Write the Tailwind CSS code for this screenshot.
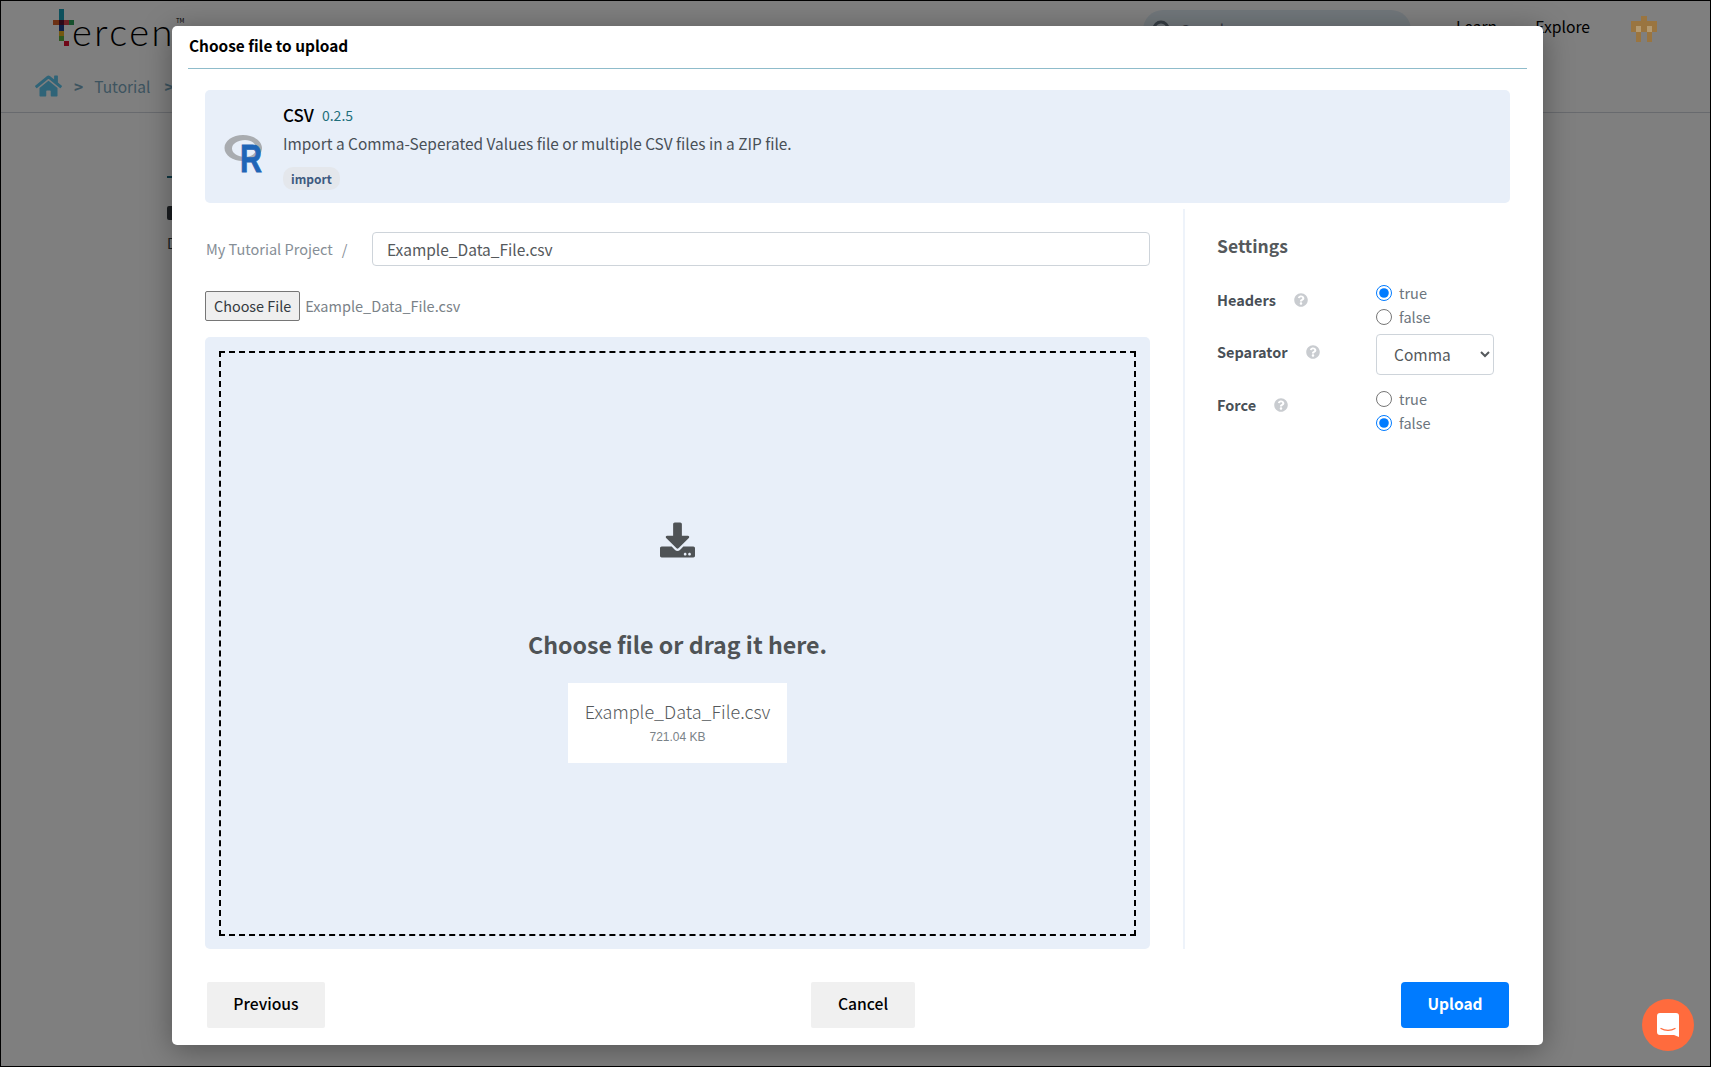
<!DOCTYPE html>
<html lang="en">
<head>
    <meta charset="UTF-8">
    <meta name="viewport" content="width=device-width, initial-scale=1.0">
    <script src="https://cdn.jsdelivr.net/npm/@tailwindcss/browser@4"></script>
    <title>Choose file to upload</title>
</head>
<body class="bg-white font-['Noto_Sans_CJK_SC',sans-serif] text-[#495057]">
<div class="relative w-[1711px] h-[1067px] overflow-hidden border border-black">
    <!-- page behind the dialog -->
    <header class="h-[112px] border-b border-gray-300">
        <div class="flex items-start h-[73px]">
            <div class="flex items-start ml-[52px] mt-[8px]">
                <svg width="21" height="37" viewBox="0 0 21 37" class="shrink-0" shape-rendering="crispEdges">
                    <rect x="6" y="0" width="5" height="11" fill="#1aa0b8"/>
                    <rect x="0" y="11" width="6" height="5" fill="#d8622a"/>
                    <rect x="6" y="11" width="5" height="5" fill="#5a1030"/>
                    <rect x="11" y="11" width="5" height="5" fill="#d8404a"/>
                    <rect x="16" y="11" width="5" height="5" fill="#2fa05a"/>
                    <rect x="6" y="16" width="5" height="6" fill="#1d3f8f"/>
                    <rect x="6" y="22" width="5" height="5" fill="#e8b020"/>
                    <rect x="6" y="27" width="5" height="5" fill="#5cb040"/>
                    <rect x="11" y="32" width="5" height="5" fill="#e01030"/>
                </svg>
                <span class="ml-[-2px] mt-[3px] text-[38px] leading-none tracking-[2.5px] font-['Lato'] font-light text-black">ercen</span>
                <span class="ml-[1px] mt-[9px] text-[6px] leading-none text-black">TM</span>
            </div>
            <div class="ml-auto mt-[9px] w-[268px] h-[40px] rounded-[20px] bg-[#e3eef7] flex items-center px-2 shrink-0">
                <svg width="22" height="22" viewBox="0 0 22 22" fill="none" stroke="#6c7a89" stroke-width="3"><circle cx="10" cy="10" r="7"/></svg>
                <span class="ml-2 text-[15px] text-gray-500">Search</span>
            </div>
            <nav class="flex items-center gap-[38px] ml-[45px] mt-[14px] text-[15.7px] leading-6 text-black">
                <span>Learn</span>
                <span>Explore</span>
            </nav>
            <svg width="26" height="26" viewBox="0 0 5 5" class="relative z-10 ml-[41px] mt-[15px] mr-[53px] shrink-0" shape-rendering="crispEdges" fill="#9a7540">
                <rect x="2" y="0" width="1" height="1"/>
                <rect x="0" y="1" width="5" height="1"/>
                <rect x="0" y="2" width="1" height="1"/>
                <rect x="2" y="2" width="1" height="1"/>
                <rect x="4" y="2" width="1" height="1"/>
                <rect x="1" y="2" width="1" height="1" fill="#b39a72"/>
                <rect x="3" y="2" width="1" height="1" fill="#b39a72"/>
                <rect x="1" y="3" width="1" height="2"/>
                <rect x="3" y="3" width="1" height="2"/>
            </svg>
        </div>
        <div class="flex items-center ml-[34px] text-[15.5px] leading-6 text-[#7aa8c0]">
            <svg width="27" height="24" viewBox="0 0 576 512" fill="#2f6478" class="relative z-10"><path d="M280.37 148.26L96 300.11V464a16 16 0 0 0 16 16l112.06-.29a16 16 0 0 0 15.92-16V368a16 16 0 0 1 16-16h64a16 16 0 0 1 16 16v95.64a16 16 0 0 0 16 16.05L464 480a16 16 0 0 0 16-16V300L295.67 148.26a12.19 12.19 0 0 0-15.3 0zM571.6 251.47L488 182.56V44.05a12 12 0 0 0-12-12h-56a12 12 0 0 0-12 12v72.61L318.47 43a48 48 0 0 0-61 0L4.34 251.47a12 12 0 0 0-1.6 16.9l25.5 31A12 12 0 0 0 45.15 301l235.22-193.74a12.19 12.19 0 0 1 15.3 0L530.9 301a12 12 0 0 0 16.9-1.6l25.5-31a12 12 0 0 0-1.7-16.93z"/></svg>
            <span class="ml-[12px] font-bold">&gt;</span>
            <span class="ml-[11px]">Tutorial</span>
            <span class="ml-[14px] font-bold">&gt;</span>
        </div>
    </header>
    <main class="pl-[166px] text-[#343a40]">
        <div class="mt-[63px] w-6 h-[2px] bg-[#1f6f85]"></div>
        <div class="mt-[28px] w-6 h-[14px] bg-[#343a40] rounded-[2px]"></div>
        <div class="mt-[13px] text-[14px] leading-5">Data</div>
    </main>

    <!-- backdrop -->
    <div class="absolute inset-0 bg-black/50"></div>

    <!-- dialog -->
    <div class="absolute left-[171px] top-[25px] w-[1371px] h-[1019px] bg-white rounded-[5px] shadow-[0_5px_30px_rgba(0,0,0,0.35)] flex flex-col">
        <div class="mx-4 h-[43px] pt-[7px] pl-px border-b border-[#8fbccb] text-[15.4px] leading-6 font-semibold text-black shrink-0">Choose file to upload</div>

        <div class="flex-1 flex flex-col px-[33px] min-h-0">
            <!-- operator card -->
            <div class="mt-[21px] h-[113px] bg-[#e8eff9] rounded-[5px] flex items-center shrink-0 pl-[19px]">
                <svg width="40" height="40" viewBox="0 0 40 40" class="shrink-0 mt-[15px] overflow-visible">
                    <path fill-rule="evenodd" fill="#a9acb0" d="M19 1C8.5 1 .5 6.8.5 14S8.5 27 19 27s19-5.8 19-13S29.500 1 19 1zM21 6c-7 0-13 3.600-13 8.500S14 23 21 23s11-3.600 11-8.500S28 6 21 6z"/>
                    <text transform="translate(16 38) scale(.78 1)" font-family="Liberation Sans" font-weight="700" font-size="39" stroke="#1f65b7" stroke-width=".8" fill="#1f65b7">R</text>
                </svg>
                <div class="ml-[19px]">
                    <div class="flex items-center">
                        <span class="text-[17px] leading-6 font-medium text-black">CSV</span>
                        <span class="ml-2 text-[14px] text-[#1f6f7c]">0.2.5</span>
                    </div>
                    <p class="mt-[4px] text-[15.43px] leading-6">Import a Comma-Seperated Values file or multiple CSV files in a ZIP file.</p>
                    <span class="inline-block mt-[12px] px-[8px] h-[23px] rounded-[10px] bg-[#e4e7ec] text-[12px] leading-[23px] font-semibold text-[#3d5a80]">import</span>
                </div>
            </div>

            <div class="flex-1 flex min-h-0">
                <!-- file column -->
                <div class="w-[945px] flex flex-col shrink-0">
                    <div class="flex items-center mt-[29px] h-[34px]">
                        <div class="w-[167px] pl-px flex text-[14.5px] text-[#868e96] shrink-0"><span>My Tutorial Project</span><span class="ml-[9px]">/</span></div>
                        <input type="text" value="Example_Data_File.csv" class="flex-1 h-[34px] px-[14px] pb-px border border-[#ced4da] rounded-[4px] text-[15.5px] text-[#55595c] bg-white">
                    </div>
                    <div class="flex items-center mt-[25px] h-[30px]">
                        <button class="h-[30px] px-2 border border-[#767676] rounded-[2px] bg-[#efefef] text-[14.4px] text-[#343a40]">Choose File</button>
                        <span class="ml-[5px] text-[14.5px] text-[#7a8288]">Example_Data_File.csv</span>
                    </div>
                    <div class="mt-[16px] flex-1 bg-[#e8eff9] rounded-[5px] px-[14px] pt-[14px] pb-[13px]">
                        <div class="h-full border-2 border-dashed border-black flex flex-col items-center pt-[169px]">
                            <svg width="35" height="36" viewBox="0 0 512 512" fill="#4f5356"><path d="M216 0h80c13.3 0 24 10.7 24 24v168h87.7c17.8 0 26.7 21.5 14.1 34.1L269.7 378.3c-7.5 7.5-19.8 7.5-27.3 0L90.1 226.1c-12.6-12.6-3.7-34.1 14.1-34.1H192V24c0-13.3 10.7-24 24-24zm296 376v112c0 13.3-10.7 24-24 24H24c-13.3 0-24-10.7-24-24V376c0-13.3 10.7-24 24-24h146.7l49 49c20.1 20.1 52.5 20.1 72.6 0l49-49H488c13.3 0 24 10.7 24 24zm-124 88c0-11-9-20-20-20s-20 9-20 20 9 20 20 20 20-9 20-20zm64 0c0-11-9-20-20-20s-20 9-20 20 9 20 20 20 20-9 20-20z"/></svg>
                            <h3 class="mt-[70px] text-[23.2px] leading-8 font-bold text-[#4f5356]">Choose file or drag it here.</h3>
                            <div class="mt-[23px] w-[219px] h-[80px] bg-white flex flex-col items-center pt-[16px]">
                                <span class="text-[18px] leading-6 font-light text-[#55595c]">Example_Data_File.csv</span>
                                <span class="mt-[6px] text-[12px] leading-4 font-['Liberation_Sans'] text-[#7a8288]">721.04 KB</span>
                            </div>
                        </div>
                    </div>
                </div>

                <!-- settings column -->
                <div class="ml-[33px] mt-[6px] flex-1 border-l-2 border-[#eef3fa] pl-[32px]">
                    <h4 class="mt-[25px] text-[17.5px] leading-6 font-semibold text-[#55595c]">Settings</h4>
                    <div class="mt-[23px] grid grid-cols-[159px_1fr] items-center gap-y-[5px] text-[14.5px]">
                        <div class="flex items-center font-semibold mb-[10px]"><span>Headers</span>
                            <svg width="14" height="14" viewBox="0 0 512 512" fill="#c9ccd0" class="ml-[18px]"><path d="M504 256c0 136.997-111.043 248-248 248S8 392.997 8 256C8 119.083 119.043 8 256 8s248 111.083 248 248zM262.655 90c-54.497 0-89.255 22.957-116.549 63.758-3.536 5.286-2.353 12.415 2.715 16.258l34.699 26.31c5.205 3.947 12.621 3.008 16.665-2.122 17.864-22.658 30.113-35.797 57.303-35.797 20.429 0 45.698 13.148 45.698 32.958 0 14.976-12.363 22.667-32.534 33.976C247.128 238.528 216 254.941 216 296v4c0 6.627 5.373 12 12 12h56c6.627 0 12-5.373 12-12v-1.333c0-28.462 83.186-29.647 83.186-106.667 0-58.002-60.165-102-116.531-102zM256 338c-25.365 0-46 20.635-46 46 0 25.364 20.635 46 46 46s46-20.636 46-46c0-25.365-20.635-46-46-46z"/></svg>
                        </div>
                        <div class="text-[#6c757d]">
                            <label class="flex items-center h-6"><input type="radio" name="headers" checked class="w-4 h-4 accent-[#007bff]"><span class="ml-[7px]">true</span></label>
                            <label class="flex items-center h-6"><input type="radio" name="headers" class="w-4 h-4 accent-[#007bff]"><span class="ml-[7px]">false</span></label>
                        </div>
                        <div class="flex items-center font-semibold mb-[6px]"><span>Separator</span>
                            <svg width="14" height="14" viewBox="0 0 512 512" fill="#c9ccd0" class="ml-[18px]"><path d="M504 256c0 136.997-111.043 248-248 248S8 392.997 8 256C8 119.083 119.043 8 256 8s248 111.083 248 248zM262.655 90c-54.497 0-89.255 22.957-116.549 63.758-3.536 5.286-2.353 12.415 2.715 16.258l34.699 26.31c5.205 3.947 12.621 3.008 16.665-2.122 17.864-22.658 30.113-35.797 57.303-35.797 20.429 0 45.698 13.148 45.698 32.958 0 14.976-12.363 22.667-32.534 33.976C247.128 238.528 216 254.941 216 296v4c0 6.627 5.373 12 12 12h56c6.627 0 12-5.373 12-12v-1.333c0-28.462 83.186-29.647 83.186-106.667 0-58.002-60.165-102-116.531-102zM256 338c-25.365 0-46 20.635-46 46 0 25.364 20.635 46 46 46s46-20.636 46-46c0-25.365-20.635-46-46-46z"/></svg>
                        </div>
                        <select class="w-[118px] h-[41px] pl-[13px] pr-[3px] pb-px border border-[#ced4da] rounded-[4px] bg-white text-[15.5px] text-[#55595c]"><option>Comma</option></select>
                        <div class="flex items-center font-semibold mb-[6px]"><span>Force</span>
                            <svg width="14" height="14" viewBox="0 0 512 512" fill="#c9ccd0" class="ml-[18px]"><path d="M504 256c0 136.997-111.043 248-248 248S8 392.997 8 256C8 119.083 119.043 8 256 8s248 111.083 248 248zM262.655 90c-54.497 0-89.255 22.957-116.549 63.758-3.536 5.286-2.353 12.415 2.715 16.258l34.699 26.31c5.205 3.947 12.621 3.008 16.665-2.122 17.864-22.658 30.113-35.797 57.303-35.797 20.429 0 45.698 13.148 45.698 32.958 0 14.976-12.363 22.667-32.534 33.976C247.128 238.528 216 254.941 216 296v4c0 6.627 5.373 12 12 12h56c6.627 0 12-5.373 12-12v-1.333c0-28.462 83.186-29.647 83.186-106.667 0-58.002-60.165-102-116.531-102zM256 338c-25.365 0-46 20.635-46 46 0 25.364 20.635 46 46 46s46-20.636 46-46c0-25.365-20.635-46-46-46z"/></svg>
                        </div>
                        <div class="text-[#6c757d] mt-[7px]">
                            <label class="flex items-center h-6"><input type="radio" name="force" class="w-4 h-4 accent-[#007bff]"><span class="ml-[7px]">true</span></label>
                            <label class="flex items-center h-6"><input type="radio" name="force" checked class="w-4 h-4 accent-[#007bff]"><span class="ml-[7px]">false</span></label>
                        </div>
                    </div>
                </div>
            </div>
        </div>

        <!-- footer buttons -->
        <div class="h-[96px] shrink-0 pt-[33px] pl-[35px] pr-[34px] flex items-start justify-between">
            <button class="w-[118px] h-[46px] pb-[2px] bg-[#f0f0f0] rounded-[2px] text-[15.7px] font-medium text-black">Previous</button>
            <button class="w-[104px] h-[46px] pb-[2px] bg-[#f0f0f0] rounded-[2px] text-[15.7px] font-medium text-black">Cancel</button>
            <button class="w-[108px] h-[46px] pb-[2px] bg-[#007bff] rounded-[4px] text-[15.5px] font-bold text-white">Upload</button>
        </div>
    </div>

    <!-- chat launcher -->
    <div class="absolute right-[16px] bottom-[15px] w-[52px] h-[52px] rounded-full bg-[#ff6b3d] flex items-center justify-center">
        <svg width="22" height="24" viewBox="0 0 22 24">
            <path d="M3 0h16a3 3 0 0 1 3 3v21l-5-2H3a3 3 0 0 1-3-3V3a3 3 0 0 1 3-3z" fill="#fff"/>
            <path d="M4 15.500c4 2.500 10 2.500 14 0" fill="none" stroke="#ff6b3d" stroke-width="1.300" stroke-linecap="round"/>
        </svg>
    </div>
</div>
</body>
</html>
